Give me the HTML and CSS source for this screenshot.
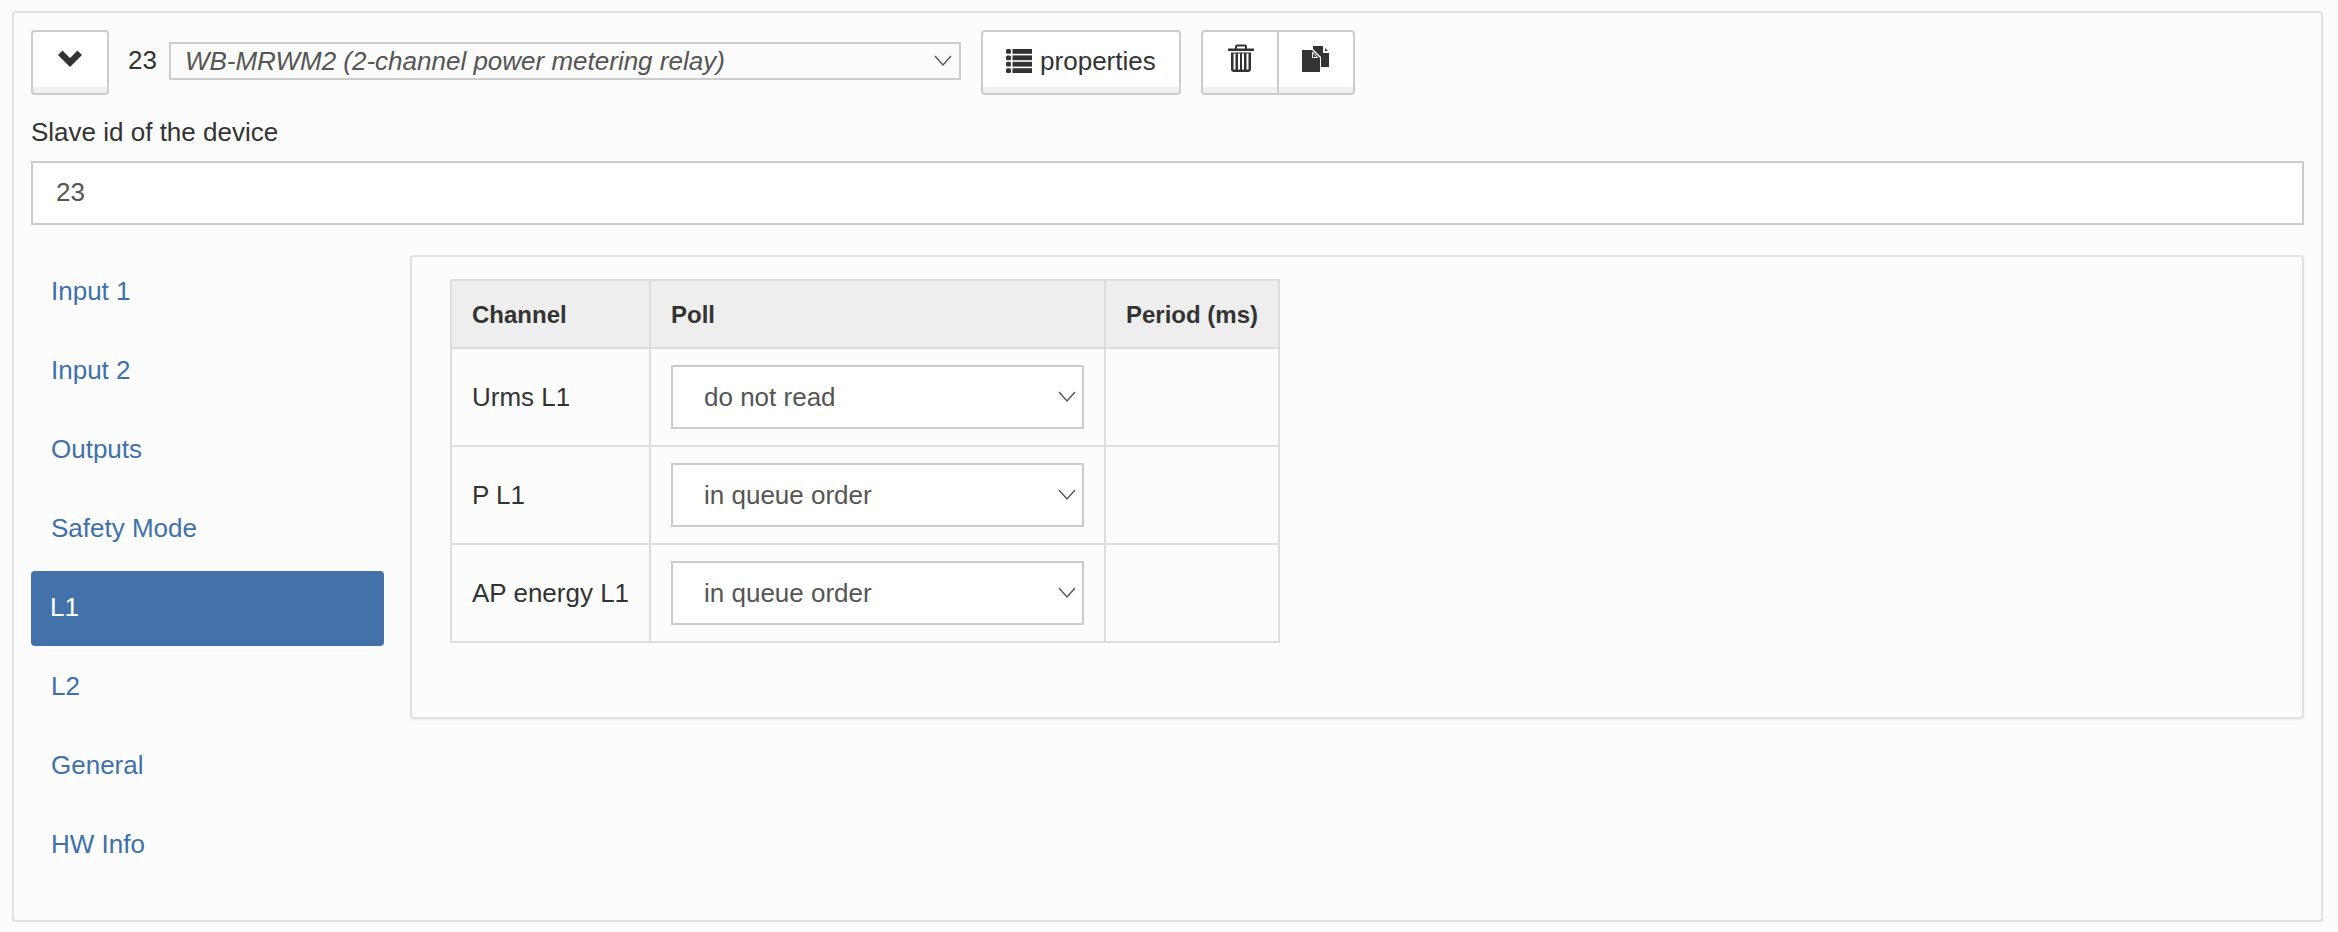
FILE: index.html
```html
<!DOCTYPE html>
<html lang="en">
<head>
<meta charset="utf-8">
<title>Device</title>
<link rel="stylesheet" href="styles.css">
</head>
<body>
<div class="well">
  <div class="toolbar">
    <button class="btn btn-toggle" type="button">
      <svg class="icon" width="24" height="18" viewBox="0 0 24 18"><path d="M0 6 L4.500 1.500 L12 9 L19.500 1.500 L24 6 L12 18 Z" fill="#333"/></svg>
    </button>
    <span class="dev-num">23</span>
    <select class="dev-select"><option>WB-MRWM2 (2-channel power metering relay)</option></select>
    <button class="btn btn-props" type="button">
      <svg class="icon" width="26" height="24" viewBox="0 0 26 24"><g fill="#333"><rect x="0" y="0" width="5" height="4.800" rx="1.500"/><rect x="0" y="6.400" width="5" height="4.800" rx="1.500"/><rect x="0" y="12.800" width="5" height="4.800" rx="1.500"/><rect x="0" y="19.200" width="5" height="4.800" rx="1.500"/><rect x="6.500" y="0" width="19.500" height="4.800"/><rect x="6.500" y="6.400" width="19.500" height="4.800"/><rect x="6.500" y="12.800" width="19.500" height="4.800"/><rect x="6.500" y="19.200" width="19.500" height="4.800"/></g></svg>
      <span>properties</span>
    </button>
    <div class="btn-group">
      <button class="btn btn-icon" type="button">
        <svg class="icon" width="26" height="28" viewBox="0 0 26 28"><path d="M7 5 V2.500 Q7 0.500 9 0.500 H17 Q19 0.500 19 2.500 V5 H17 V2.500 H9 V5 Z" fill="#333"/><path d="M0 4.500 H26 V7 H0 Z M3 8.500 H23 V25 Q23 28 20 28 H6 Q3 28 3 25 Z" fill="#333"/><path d="M5.500 9.500 H7.500 V25.500 H5.500 Z M10 9.500 H12 V25.500 H10 Z M14 9.500 H16 V25.500 H14 Z M18.500 9.500 H20.500 V25.500 H18.500 Z" fill="#fff"/></svg>
      </button>
      <button class="btn btn-icon" type="button">
        <svg class="icon" width="27" height="26" viewBox="0 0 27 26"><path d="M0 4 H10 L18 12 V26 H0 Z M11 0 H21 V7 H27 V21 H19 V11 L11 3 Z" fill="#333"/><path d="M10.500 6 L15.500 11.500 H10.500 Z M22.500 1 L27 5.500 H22.500 Z" fill="#333" stroke="#fff" stroke-width="1"/></svg>
      </button>
    </div>
  </div>
  <label class="field-label" for="slave">Slave id of the device</label>
  <input class="field-input" id="slave" type="text" value="23">
  <div class="tabs">
    <ul class="nav">
      <li><a>Input 1</a></li>
      <li><a>Input 2</a></li>
      <li><a>Outputs</a></li>
      <li><a>Safety Mode</a></li>
      <li class="active"><a>L1</a></li>
      <li><a>L2</a></li>
      <li><a>General</a></li>
      <li><a>HW Info</a></li>
    </ul>
    <div class="panel">
      <table class="channels">
        <thead>
          <tr><th class="c1">Channel</th><th class="c2">Poll</th><th class="c3">Period (ms)</th></tr>
        </thead>
        <tbody>
          <tr><td>Urms L1</td><td><select class="poll"><option>do not read</option></select></td><td></td></tr>
          <tr><td>P L1</td><td><select class="poll"><option>in queue order</option></select></td><td></td></tr>
          <tr><td>AP energy L1</td><td><select class="poll"><option>in queue order</option></select></td><td></td></tr>
        </tbody>
      </table>
    </div>
  </div>
</div>
</body>
</html>
```
FILE: styles.css
```css
* { box-sizing: border-box; }
html, body { margin: 0; padding: 0; }
body {
  background: #fbfbfb;
  color: #333;
  font-family: "Liberation Sans", Arial, sans-serif;
  font-size: 26px;
  line-height: 37px;
}
.well {
  margin: 11px 15px 0 12px;
  height: 911px;
  padding: 17px 17px 0 17px;
  background: #fcfcfc;
  border: 2px solid #e0e0e0;
  border-radius: 4px;
  box-shadow: 0 1px 2px rgba(0,0,0,.05);
}
.toolbar { display: flex; align-items: flex-start; }
.btn {
  display: flex;
  align-items: center;
  justify-content: center;
  height: 65px;
  margin: 0;
  padding: 0 0 10px;
  font: inherit;
  color: #333;
  background: #fff;
  border: 2px solid #ccc;
  border-radius: 4px;
  box-shadow: inset 0 -6px 0 #f0f0f0;
}
.btn-toggle { width: 78px; }
.dev-num { margin: 12px 12px 0 19px; line-height: 37px; }
.dev-select {
  width: 792px;
  height: 38px;
  margin: 12px 20px 0 0;
  padding: 0 40px 0 14px;
  appearance: none;
  font: italic 26px "Liberation Sans", Arial, sans-serif;
  color: #555;
  background: #fbfbfb url("data:image/svg+xml,%3Csvg xmlns='http://www.w3.org/2000/svg' width='18' height='12'%3E%3Cpath d='M1 1 L9 10 L17 1' fill='none' stroke='%23555' stroke-width='1.400'/%3E%3C/svg%3E") no-repeat right 7px center;
  border: 2px solid #ccc;
  border-radius: 0;
}
.btn-props { width: 200px; gap: 8px; margin-right: 20px; padding-bottom: 3px; }
.btn-group { display: flex; }
.btn-icon { width: 78px; }
.btn-group .btn-icon:first-child { border-top-right-radius: 0; border-bottom-right-radius: 0; padding-left: 3px; }
.btn-group .btn-icon:last-child { margin-left: -2px; border-top-left-radius: 0; border-bottom-left-radius: 0; padding-bottom: 8px; }
.field-label { display: block; margin-top: 19px; }
.field-input {
  display: block;
  width: 100%;
  height: 64px;
  margin-top: 10px;
  padding: 0 23px 2px;
  font: inherit;
  color: #555;
  background: #fff;
  border: 2px solid #ccc;
  border-radius: 0;
}
.tabs { display: flex; margin-top: 30px; }
.nav { width: 353px; margin: 0 26px 0 0; padding: 0; list-style: none; flex: none; }
.nav li { margin-bottom: 4px; }
.nav a {
  display: block;
  height: 75px;
  padding: 18px 20px 0;
  color: #3c71ab;
  border-radius: 4px;
}
.nav .active a { color: #fff; background: #4372aa; padding-left: 19px; }
.panel {
  flex: 1;
  height: 464px;
  padding: 22px 38px 0;
  background: #fcfcfc;
  border: 2px solid #e0e0e0;
  border-radius: 4px;
  box-shadow: 0 1px 2px rgba(0,0,0,.05);
}
.channels { border-collapse: collapse; width: 828px; table-layout: fixed; border: 2px solid #ddd; }
.channels th, .channels td { border: 2px solid #ddd; padding: 0 20px; text-align: left; white-space: nowrap; }
.channels th { height: 68px; background: #eee; font-weight: bold; font-size: 24px; }
.channels td { height: 98px; }
.c1 { width: 199px; }
.c2 { width: 455px; }
.c3 { width: 174px; }
.poll {
  display: block;
  width: 100%;
  height: 64px;
  padding: 0 40px 0 31px;
  appearance: none;
  font: inherit;
  color: #555;
  background: #fff url("data:image/svg+xml,%3Csvg xmlns='http://www.w3.org/2000/svg' width='18' height='12'%3E%3Cpath d='M1 1 L9 10 L17 1' fill='none' stroke='%23555' stroke-width='1.400'/%3E%3C/svg%3E") no-repeat right 6px center;
  border: 2px solid #ccc;
  border-radius: 0;
}
.icon { display: block; flex: none; }
```
